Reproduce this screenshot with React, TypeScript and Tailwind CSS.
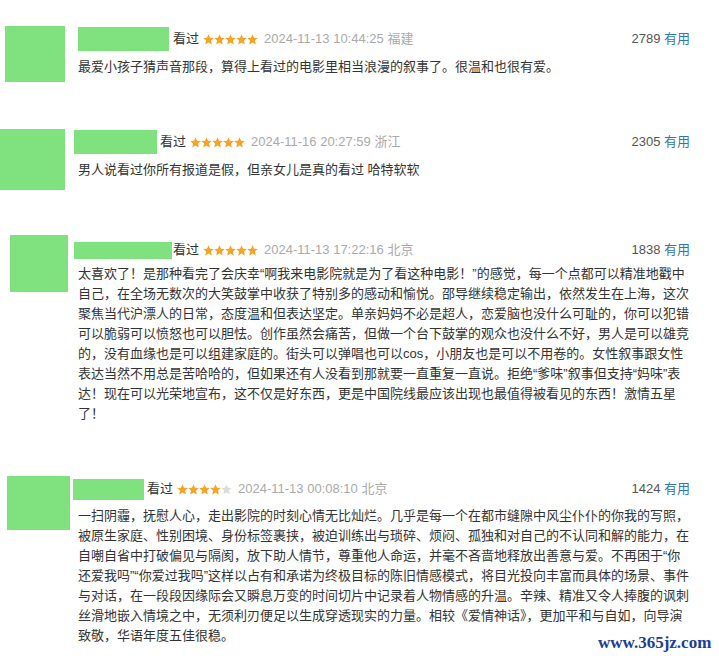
import React from 'react';

type Review = {
  block: string;
  avatar: string;
  col: string;
  name: string;
  seen: string;
  text: string;
  stars: number;
  date: string;
  count: string;
  lines: string[];
};

const reviews: Review[] = [
  {
    block: 'mt-[26px]',
    avatar: 'ml-[5px] w-[60px] h-[56px]',
    col: 'ml-[13px] mt-[1px]',
    name: 'w-[91px] h-[24px]',
    seen: 'ml-[4px]',
    text: 'mt-[6px]',
    stars: 5,
    date: '2024-11-13 10:44:25 福建',
    count: '2789',
    lines: ['最爱小孩子猜声音那段，算得上看过的电影里相当浪漫的叙事了。很温和也很有爱。'],
  },
  {
    block: 'mt-[47px]',
    avatar: 'ml-0 w-[65px] h-[61px]',
    col: 'ml-[13px] mt-[1px]',
    name: '-ml-[4px] w-[83px] h-[24px]',
    seen: 'ml-[3px]',
    text: 'mt-[6px]',
    stars: 5,
    date: '2024-11-16 20:27:59 浙江',
    count: '2305',
    lines: ['男人说看过你所有报道是假，但亲女儿是真的看过 哈特软软'],
  },
  {
    block: 'mt-[45px]',
    avatar: 'ml-[10px] w-[58px] h-[57px]',
    col: 'ml-[10px] mt-[3px]',
    name: '-ml-[4px] w-[98px] h-[17px]',
    seen: 'ml-[1px]',
    text: 'mt-[2px]',
    stars: 5,
    date: '2024-11-13 17:22:16 北京',
    count: '1838',
    lines: [
      '太喜欢了！是那种看完了会庆幸“啊我来电影院就是为了看这种电影！”的感觉，每一个点都可以精准地戳中',
      '自己，在全场无数次的大笑鼓掌中收获了特别多的感动和愉悦。邵导继续稳定输出，依然发生在上海，这次',
      '聚焦当代沪漂人的日常，态度温和但表达坚定。单亲妈妈不必是超人，恋爱脑也没什么可耻的，你可以犯错',
      '可以脆弱可以愤怒也可以胆怯。创作虽然会痛苦，但做一个台下鼓掌的观众也没什么不好，男人是可以雄竞',
      '的，没有血缘也是可以组建家庭的。街头可以弹唱也可以cos，小朋友也是可以不用卷的。女性叙事跟女性',
      '表达当然不用总是苦哈哈的，但如果还有人没看到那就要一直重复一直说。拒绝“爹味”叙事但支持“妈味”表',
      '达！现在可以光荣地宣布，这不仅是好东西，更是中国院线最应该出现也最值得被看见的东西！激情五星',
      '了！',
    ],
  },
  {
    block: 'mt-[52px]',
    avatar: 'ml-[7px] w-[63px] h-[54px]',
    col: 'ml-[8px] mt-[1px]',
    name: '-ml-[5px] w-[71px] h-[21px]',
    seen: 'ml-[3px]',
    text: 'mt-[5px]',
    stars: 4,
    date: '2024-11-13 00:08:10 北京',
    count: '1424',
    lines: [
      '一扫阴霾，抚慰人心，走出影院的时刻心情无比灿烂。几乎是每一个在都市缝隙中风尘仆仆的你我的写照，',
      '被原生家庭、性别困境、身份标签裹挟，被迫训练出与琐碎、烦闷、孤独和对自己的不认同和解的能力，在',
      '自嘲自省中打破偏见与隔阂，放下助人情节，尊重他人命运，并毫不吝啬地释放出善意与爱。不再困于“你',
      '还爱我吗”“你爱过我吗”这样以占有和承诺为终极目标的陈旧情感模式，将目光投向丰富而具体的场景、事件',
      '与对话，在一段段因缘际会又瞬息万变的时间切片中记录着人物情感的升温。辛辣、精准又令人捧腹的讽刺',
      '丝滑地嵌入情境之中，无须利刃便足以生成穿透现实的力量。相较《爱情神话》，更加平和与自如，向导演',
      '致敬，华语年度五佳很稳。',
    ],
  },
];

function Star({ on }: { on: boolean }) {
  return (
    <svg width="11" height="11" viewBox="0 0 24 24" className="shrink-0">
      <polygon
        points="12,0.5 15.3,8 23.5,8.8 17.3,14.3 19.1,22.8 12,18.5 4.9,22.8 6.7,14.3 0.5,8.8 8.7,8"
        fill={on ? '#f7a323' : '#dcdcdc'}
      />
    </svg>
  );
}

function ReviewRow({ r }: { r: Review }) {
  return (
    <div className={`flex items-start ${r.block}`}>
      <div className={`shrink-0 bg-[#80e27e] ${r.avatar}`} />
      <div className={`w-[612px] ${r.col}`}>
        <div className="flex items-center h-[24px]">
          <div className={`shrink-0 bg-[#80e27e] ${r.name}`} />
          <span className={`text-[13px] text-[#333] ${r.seen}`}>看过</span>
          <span className="ml-[4px] flex">
            {[0, 1, 2, 3, 4].map((i) => (
              <Star key={i} on={i < r.stars} />
            ))}
          </span>
          <span className="ml-[6px] text-[13px] text-[#aaa]">{r.date}</span>
          <span className="ml-auto text-[13px] text-[#555]">
            {r.count} <span className="text-[#3377aa]">有用</span>
          </span>
        </div>
        <div className={`text-[13px] leading-[20px] text-[#333] ${r.text}`}>
          {r.lines.map((l, i) => (
            <div key={i} className="whitespace-nowrap">
              {l}
            </div>
          ))}
        </div>
      </div>
    </div>
  );
}

export default function App() {
  return (
    <div
      className="relative w-[719px] h-[658px] overflow-hidden bg-white"
      style={{ fontFamily: '"Liberation Sans", "Noto Sans CJK SC", sans-serif' }}
    >
      <div className="flex flex-col">
        {reviews.map((r, i) => (
          <ReviewRow key={i} r={r} />
        ))}
      </div>
      <div className="absolute left-[598px] top-[634px] text-[17px] leading-none font-bold text-[#1c3f94] font-['Liberation_Serif',serif]">
        www.365jz.com
      </div>
    </div>
  );
}
